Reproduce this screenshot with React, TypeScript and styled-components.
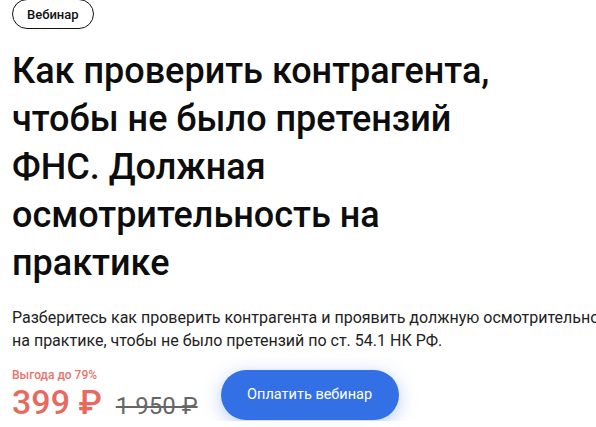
import React from "react";
import styled, { createGlobalStyle } from "styled-components";

const Global = createGlobalStyle`
  html, body { margin: 0; padding: 0; background: #ffffff; overflow: hidden; }
  body { font-family: Roboto, "Liberation Sans", Arial, sans-serif; color: #111; }
`;

const Page = styled.div`
  width: 640px;
  padding: 0 0 0 12px;
  display: flex;
  flex-direction: column;
  align-items: flex-start;
`;

const Badge = styled.div`
  box-sizing: border-box;
  height: 30px;
  margin-top: -1px;
  padding: 0 14px;
  border: 1px solid #111;
  border-radius: 15px;
  display: flex;
  align-items: center;
  font-size: 13px;
  font-weight: 500;
  color: #111;
`;

const Title = styled.h1`
  margin: 18px 0 0;
  width: 520px;
  font-size: 36px;
  line-height: 48px;
  font-weight: 500;
  color: #0d0d0d;
  letter-spacing: 0;
`;

const Lead = styled.p`
  margin: 19px 0 0;
  width: 620px;
  font-size: 16px;
  line-height: 23px;
  font-weight: 400;
  color: #222;
`;

const Bottom = styled.div`
  margin-top: 16px;
  display: flex;
  align-items: center;
  gap: 23px;
`;

const PriceBlock = styled.div`
  display: flex;
  flex-direction: column;
`;

const Discount = styled.div`
  font-size: 12px;
  line-height: 14px;
  font-weight: 500;
  color: #e8736b;
`;

const Prices = styled.div`
  display: flex;
  align-items: baseline;
  gap: 14px;
  margin-top: 1px;
`;

const Price = styled.span`
  font-size: 34px;
  line-height: 38px;
  font-weight: 500;
  color: #e8695e;
`;

const OldPrice = styled.span`
  font-size: 24px;
  line-height: 28px;
  font-weight: 400;
  color: #666;
  text-decoration: line-through;
  text-decoration-thickness: 1.5px;
`;

const PayButton = styled.button`
  width: 178px;
  height: 50px;
  border: none;
  border-radius: 25px;
  background: #3370e6;
  color: #fff;
  font-family: Roboto, "Liberation Sans", Arial, sans-serif;
  font-size: 14.5px;
  font-weight: 400;
  box-shadow: 0 4px 18px rgba(51, 112, 230, 0.35);
  cursor: pointer;
`;

export default function App() {
  return (
    <>
      <Global />
      <Page>
        <Badge>Вебинар</Badge>
        <Title>
          Как проверить контрагента, чтобы не было претензий ФНС. Должная
          осмотрительность на практике
        </Title>
        <Lead>
          Разберитесь как проверить контрагента и проявить должную
          осмотрительность на практике, чтобы не было претензий по ст. 54.1 НК РФ.
        </Lead>
        <Bottom>
          <PriceBlock>
            <Discount>Выгода до 79%</Discount>
            <Prices>
              <Price>399 ₽</Price>
              <OldPrice>1 950 ₽</OldPrice>
            </Prices>
          </PriceBlock>
          <PayButton>Оплатить вебинар</PayButton>
        </Bottom>
      </Page>
    </>
  );
}
